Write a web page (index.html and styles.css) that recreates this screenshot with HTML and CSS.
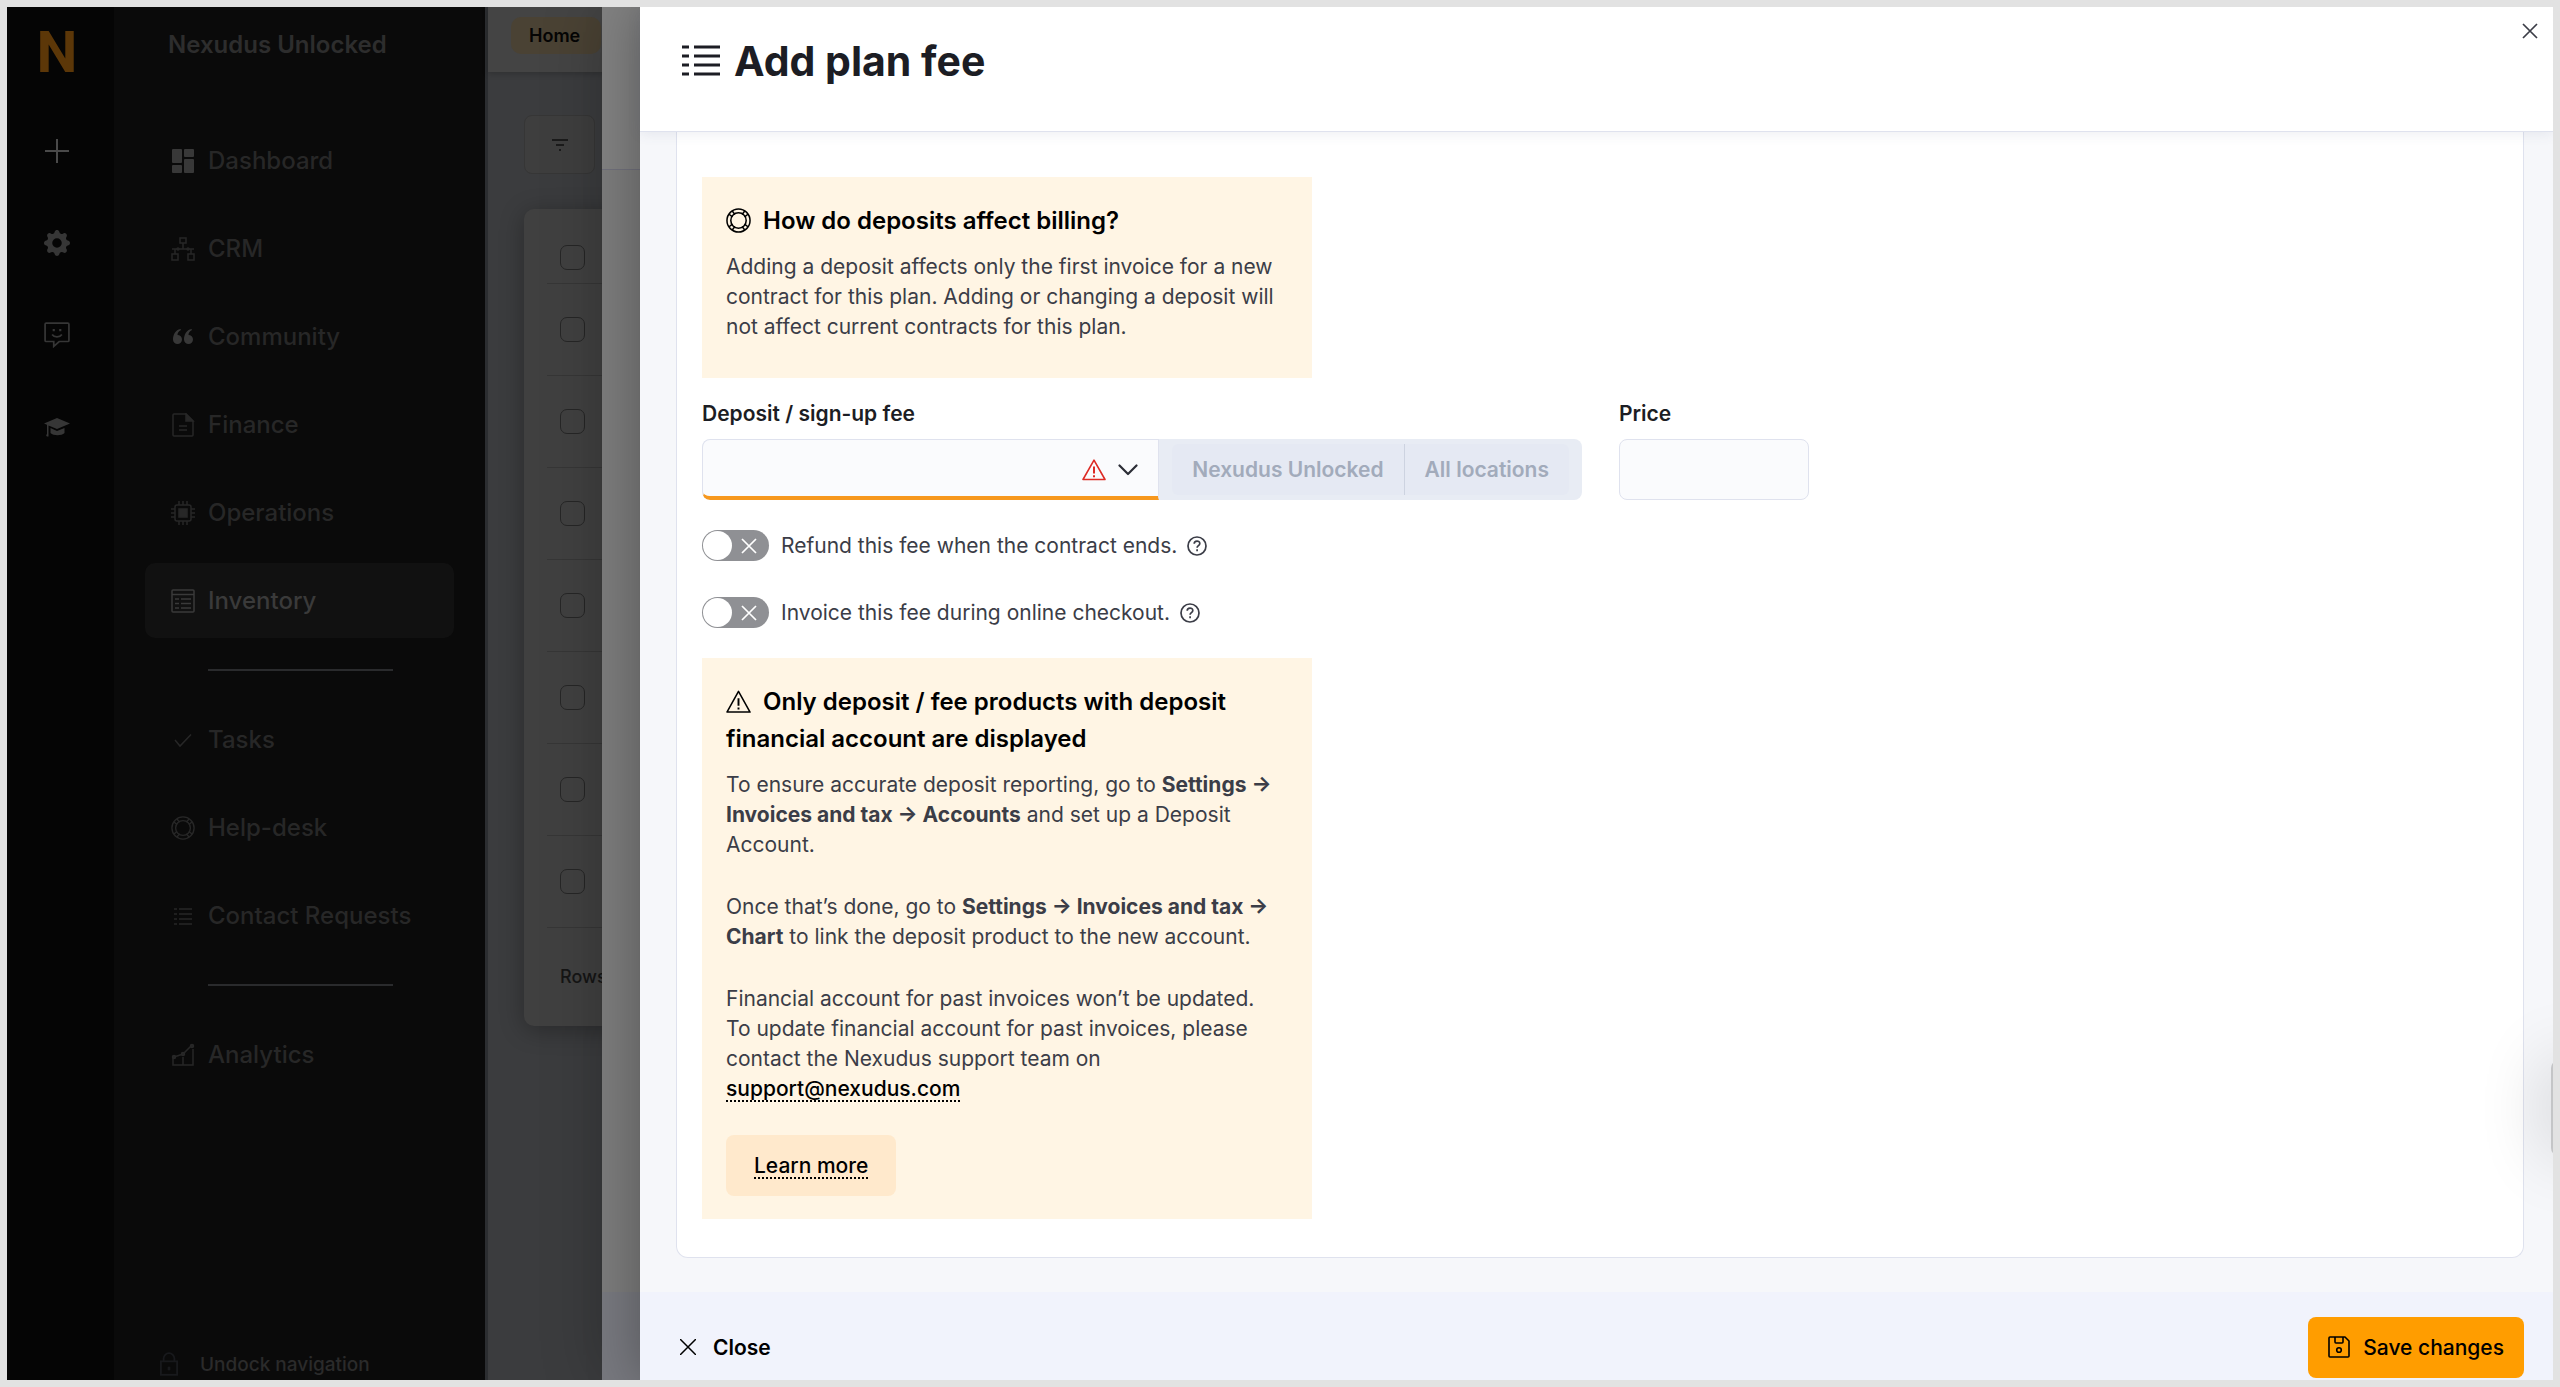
FILE: index.html
```html
<!DOCTYPE html>
<html lang="en">
<head>
    <meta charset="UTF-8">
    <meta name="viewport" content="width=device-width, initial-scale=1.0">
    <title>Add plan fee - Nexudus Unlocked</title>
    <link rel="stylesheet" href="styles.css">
</head>
<body>
    <div class="app">
        <div class="rail">
            <a href="#" class="logo">N</a>
            <button class="rail-btn rail-add" aria-label="Add">
                <svg viewBox="0 0 26 26" fill="none" stroke="currentColor" stroke-width="2"><path d="M13 1v24M1 13h24"/></svg>
            </button>
            <button class="rail-btn" aria-label="Settings">
                <svg viewBox="0 0 16 16" fill="currentColor"><path d="M9.405 1.05c-.413-1.4-2.397-1.4-2.81 0l-.1.34a1.464 1.464 0 0 1-2.105.872l-.31-.17c-1.283-.698-2.686.705-1.987 1.987l.169.311c.446.82.023 1.841-.872 2.105l-.34.1c-1.4.413-1.4 2.397 0 2.81l.34.1a1.464 1.464 0 0 1 .872 2.105l-.17.31c-.698 1.283.705 2.686 1.987 1.987l.311-.169a1.464 1.464 0 0 1 2.105.872l.1.34c.413 1.4 2.397 1.4 2.81 0l.1-.34a1.464 1.464 0 0 1 2.105-.872l.31.17c1.283.698 2.686-.705 1.987-1.987l-.169-.311a1.464 1.464 0 0 1 .872-2.105l.34-.1c1.4-.413 1.4-2.397 0-2.81l-.34-.1a1.464 1.464 0 0 1-.872-2.105l.17-.31c.698-1.283-.705-2.686-1.987-1.987l-.311.169a1.464 1.464 0 0 1-2.105-.872zM8 10.93a2.929 2.929 0 1 1 0-5.86 2.929 2.929 0 0 1 0 5.858z"/></svg>
            </button>
            <button class="rail-btn" aria-label="Feedback">
                <svg viewBox="0 0 24 24" fill="none" stroke="currentColor" stroke-width="1.6"><path d="M2 1h20a1 1 0 0 1 1 1v15a1 1 0 0 1-1 1H14l-5 4.500V18H2a1 1 0 0 1-1-1V2a1 1 0 0 1 1-1z"/><path d="M7.500 11.500c2 3 7 3 9 0"/><path d="M9 6.500v2M15 6.500v2" stroke-width="2"/></svg>
            </button>
            <button class="rail-btn" aria-label="Academy">
                <svg viewBox="0 0 26 24" fill="currentColor"><path d="M13 3 0 8.500l3 1.200V19c-1 1-1 2 0 2.500h1.500v-11L13 14l13-5.500z"/><path d="M6.500 13v5c3 3 11 3 14 0v-5L13 16z"/></svg>
            </button>
        </div>

        <div class="sidebar">
            <div class="brand">Nexudus Unlocked</div>
            <nav class="nav">
                <a href="#" class="nav-item">
                    <svg class="bright" viewBox="0 0 24 24" fill="currentColor"><rect x="1" y="0" width="10" height="14" rx="1"/><rect x="13" y="0" width="10" height="8" rx="1"/><rect x="1" y="16" width="10" height="8" rx="1"/><rect x="13" y="10" width="10" height="14" rx="1"/></svg>
                    Dashboard
                </a>
                <a href="#" class="nav-item">
                    <svg viewBox="0 0 24 24" fill="none" stroke="currentColor" stroke-width="1.500"><rect x="9" y="1" width="6" height="5"/><rect x="1" y="17" width="6" height="6"/><rect x="17" y="17" width="6" height="6"/><path d="M12 6v6M1 12h22M4 12v5M20 12v5"/><circle cx="7" cy="12" r="1"/><circle cx="17" cy="12" r="1"/></svg>
                    CRM
                </a>
                <a href="#" class="nav-item">
                    <svg class="bright" viewBox="0 0 24 24" fill="currentColor"><path d="M9.500 4C4.500 5 2 9.500 2 14.500A4.500 4.500 0 1 0 6.500 10c0-2 1-4 3.500-5zM20.500 4C15.500 5 13 9.500 13 14.500A4.500 4.500 0 1 0 17.500 10c0-2 1-4 3.500-5z"/></svg>
                    Community
                </a>
                <a href="#" class="nav-item">
                    <svg viewBox="0 0 24 24" fill="none" stroke="currentColor" stroke-width="1.500"><path d="M3 1h12l7 7v14a1 1 0 0 1-1 1H3a1 1 0 0 1-1-1V2a1 1 0 0 1 1-1z"/><path d="M15 1v7h7z" fill="currentColor"/><path d="M8 13h8M8 17h8"/></svg>
                    Finance
                </a>
                <a href="#" class="nav-item">
                    <svg viewBox="0 0 24 24" fill="none" stroke="currentColor" stroke-width="1.500"><rect x="4" y="4" width="16" height="16" rx="2"/><rect x="8" y="8" width="8" height="8" fill="currentColor"/><path d="M8 0v4M12 0v4M16 0v4M8 20v4M12 20v4M16 20v4M0 8h4M0 12h4M0 16h4M20 8h4M20 12h4M20 16h4"/></svg>
                    Operations
                </a>
                <a href="#" class="nav-item active">
                    <svg viewBox="0 0 24 24" fill="none" stroke="currentColor" stroke-width="1.500"><rect x="1" y="1" width="22" height="22" rx="1"/><path d="M1 5.500h22M4 10h4M10 10h10M4 14.500h4M10 14.500h10M4 19h4M10 19h10"/></svg>
                    Inventory
                </a>
                <hr class="nav-divider">
                <a href="#" class="nav-item">
                    <svg viewBox="0 0 24 24" fill="none" stroke="currentColor" stroke-width="1.500"><path d="M4 12l5 6L20 6.500"/></svg>
                    Tasks
                </a>
                <a href="#" class="nav-item">
                    <svg viewBox="0 0 26 26" fill="none" stroke="currentColor" stroke-width="1.500"><circle cx="13" cy="13" r="12"/><circle cx="13" cy="13" r="8"/><path d="M6.500 3.200l2.800 3.500M3.200 6.500l3.500 2.800M19.500 3.200l-2.800 3.500M22.800 6.500l-3.500 2.800M6.500 22.800l2.800-3.500M3.200 19.500l3.500-2.800M19.500 22.800l-2.800-3.500M22.800 19.500l-3.500-2.800"/></svg>
                    Help-desk
                </a>
                <a href="#" class="nav-item">
                    <svg viewBox="0 0 24 24" fill="none" stroke="currentColor" stroke-width="1.500"><path d="M3 5h3M8 5h13M3 10h3M8 10h13M3 15h3M8 15h13M3 20h3M8 20h13"/></svg>
                    Contact Requests
                </a>
                <hr class="nav-divider">
                <a href="#" class="nav-item">
                    <svg viewBox="0 0 24 24" fill="none" stroke="currentColor" stroke-width="1.500"><path d="M2 13v9h20V6M3 14l9-3 9-9M12 14v8"/><circle cx="3" cy="14" r="1.500" fill="currentColor"/><circle cx="12" cy="11" r="1.500" fill="currentColor"/><circle cx="21" cy="3" r="1.500" fill="currentColor"/></svg>
                    Analytics
                </a>
            </nav>
            <button class="undock">
                <svg viewBox="0 0 20 26" fill="none" stroke="currentColor" stroke-width="2"><rect x="1" y="10" width="18" height="15"/><path d="M4 10V7a6 6 0 0 1 12 0v3"/><path d="M10 16v4" stroke-width="3"/></svg>
                Undock navigation
            </button>
        </div>

        <div class="workspace">
            <div class="topbar">
                <a href="#" class="tab">Home</a>
            </div>
            <div class="content">
                <button class="filter" aria-label="Filter">
                    <svg viewBox="0 0 16 12" fill="none" stroke="currentColor" stroke-width="2"><path d="M0 1h16M4 6h8M7 11h2"/></svg>
                </button>
                <div class="list">
                    <table class="list-table">
                        <thead>
                            <tr><th><input type="checkbox" aria-label="Select all"></th></tr>
                        </thead>
                        <tbody>
                            <tr><td><input type="checkbox" aria-label="Select row 1"></td></tr>
                            <tr><td><input type="checkbox" aria-label="Select row 2"></td></tr>
                            <tr><td><input type="checkbox" aria-label="Select row 3"></td></tr>
                            <tr><td><input type="checkbox" aria-label="Select row 4"></td></tr>
                            <tr><td><input type="checkbox" aria-label="Select row 5"></td></tr>
                            <tr><td><input type="checkbox" aria-label="Select row 6"></td></tr>
                            <tr><td><input type="checkbox" aria-label="Select row 7"></td></tr>
                        </tbody>
                    </table>
                    <div class="list-footer">Rows</div>
                </div>
            </div>
        </div>

        <!-- parent drawer, dimmed under the open one -->
        <div class="drawer-under">
            <div class="under-header"></div>
            <div class="under-body"></div>
            <div class="under-footer"></div>
        </div>

        <div class="drawer">
            <div class="drawer-header">
                <svg class="title-icon" viewBox="0 0 38 32" fill="none" stroke="currentColor" stroke-width="3"><path d="M0 2h7M12 2h26M0 11h7M12 11h26M0 20h7M12 20h26M0 29h7M12 29h26"/></svg>
                <h1>Add plan fee</h1>
                <button class="dismiss" aria-label="Dismiss">
                    <svg viewBox="0 0 16 16" fill="none" stroke="currentColor" stroke-width="1.700"><path d="M1 1l14 14M15 1L1 15"/></svg>
                </button>
            </div>

            <div class="drawer-body">
                <div class="card">
                    <div class="callout">
                        <h2>
                            <svg class="callout-icon" viewBox="0 0 26 26" fill="none" stroke="currentColor" stroke-width="1.600"><circle cx="13" cy="13" r="12"/><circle cx="13" cy="13" r="8"/><path d="M6.500 3.200l2.800 3.500M3.200 6.500l3.500 2.800M19.500 3.200l-2.800 3.500M22.800 6.500l-3.500 2.800M6.500 22.800l2.800-3.500M3.200 19.500l3.500-2.800M19.500 22.800l-2.800-3.500M22.800 19.500l-3.500-2.800"/></svg>How do deposits affect billing?
                        </h2>
                        <div class="callout-text">
                            <p>Adding a deposit affects only the first invoice for a new contract for this plan. Adding or changing a deposit will not affect current contracts for this plan.</p>
                        </div>
                    </div>

                    <div class="form-row">
                        <div class="field">
                            <label for="deposit">Deposit / sign-up fee</label>
                            <div class="deposit-group">
                                <div class="select-wrap">
                                    <select id="deposit"></select>
                                    <div class="select-icons">
                                        <svg class="warn" viewBox="0 0 24 22" fill="none" stroke="currentColor" stroke-width="1.600" stroke-linejoin="round"><path d="M12 1.200L23 20.500H1z"/><path d="M12 7.500v7M12 16.300v2" stroke-width="2"/></svg>
                                        <svg class="chevron" viewBox="0 0 20 12" fill="none" stroke="currentColor" stroke-width="2.200" stroke-linecap="round" stroke-linejoin="round"><path d="M1.500 1.500L10 10l8.500-8.500"/></svg>
                                    </div>
                                </div>
                                <div class="scope">
                                    <span>Nexudus Unlocked</span>
                                    <span>All locations</span>
                                </div>
                            </div>
                        </div>
                        <div class="field">
                            <label for="price">Price</label>
                            <input type="text" id="price" class="price">
                        </div>
                    </div>

                    <div class="switches">
                        <div class="switch-row">
                            <label class="switch-label">
                                <span class="switch">
                                    <input type="checkbox">
                                    <svg viewBox="0 0 16 16" fill="none" stroke="currentColor" stroke-width="1.700"><path d="M1 1l14 14M15 1L1 15"/></svg>
                                </span>
                                Refund this fee when the contract ends.
                            </label>
                            <svg class="help" viewBox="0 0 20 20" fill="none" stroke="currentColor" stroke-width="1.700"><circle cx="10" cy="10" r="9"/><path d="M7.200 7.800c0-3.600 5.600-3.500 5.600-.3 0 2.100-2.700 2.100-2.700 4.200M10.100 13.300v2"/></svg>
                        </div>
                        <div class="switch-row">
                            <label class="switch-label">
                                <span class="switch">
                                    <input type="checkbox">
                                    <svg viewBox="0 0 16 16" fill="none" stroke="currentColor" stroke-width="1.700"><path d="M1 1l14 14M15 1L1 15"/></svg>
                                </span>
                                Invoice this fee during online checkout.
                            </label>
                            <svg class="help" viewBox="0 0 20 20" fill="none" stroke="currentColor" stroke-width="1.700"><circle cx="10" cy="10" r="9"/><path d="M7.200 7.800c0-3.600 5.600-3.500 5.600-.3 0 2.100-2.700 2.100-2.700 4.200M10.100 13.300v2"/></svg>
                        </div>
                    </div>

                    <div class="callout">
                        <h2>
                            <svg class="callout-icon" viewBox="0 0 26 26" fill="none" stroke="currentColor" stroke-width="1.600" stroke-linejoin="round"><path d="M13 2.500L25 24H1z"/><path d="M13 9.500v8M13 19.300v2" stroke-width="2"/></svg>Only deposit / fee products with deposit financial account are displayed
                        </h2>
                        <div class="callout-text">
                            <p>To ensure accurate deposit reporting, go to <strong>Settings → Invoices and tax → Accounts</strong> and set up a Deposit Account.</p>
                            <p>Once that’s done, go to <strong>Settings → Invoices and tax → Chart</strong> to link the deposit product to the new account.</p>
                            <p>Financial account for past invoices won’t be updated. To update financial account for past invoices, please contact the Nexudus support team on <a href="mailto:support@nexudus.com">support@nexudus.com</a></p>
                        </div>
                        <a href="#" class="learn-more">Learn more</a>
                    </div>
                </div>
            </div>

            <div class="drawer-footer">
                <button class="close-btn">
                    <svg viewBox="0 0 16 16" fill="none" stroke="currentColor" stroke-width="1.500"><path d="M0 0l16 16M16 0L0 16"/></svg>
                    Close
                </button>
                <button class="save-btn">
                    <svg viewBox="0 0 22 22" fill="none" stroke="currentColor" stroke-width="1.600" stroke-linejoin="round"><path d="M1 2a1 1 0 0 1 1-1h15l4 4v15a1 1 0 0 1-1 1H2a1 1 0 0 1-1-1z"/><path d="M7 1v5a1 1 0 0 0 1 1h6a1 1 0 0 0 1-1V1"/><circle cx="11" cy="14" r="2.300"/></svg>
                    Save changes
                </button>
            </div>
        </div>

        <div class="side-widget"></div>
    </div>
</body>
</html>
```

FILE: styles.css
```css
* {
    box-sizing: border-box;
}
body {
    font-family: Inter, 'Open Sans', sans-serif;
    margin: 0;
    padding: 7px;
    height: 100vh;
    background-color: #e2e2e2;
    font-size: 21px;
    color: #3b3d47;
}
button, input, select {
    font-family: inherit;
    font-size: inherit;
    color: inherit;
    margin: 0;
}
button {
    background: none;
    border: none;
    padding: 0;
    cursor: pointer;
}
a {
    color: inherit;
    text-decoration: none;
}
.app {
    position: relative;
    display: flex;
    height: 100%;
    overflow: hidden;
}

/* icon rail */
.rail {
    width: 107px;
    flex: none;
    background-color: #050505;
    color: #363636;
    display: flex;
    flex-direction: column;
    align-items: center;
    gap: 66px;
    padding: 18px 7px 0 0;
}
.logo {
    height: 47px;
    font-family: Roboto, sans-serif;
    font-size: 58px;
    line-height: 54px;
    font-weight: 700;
    color: #5c3708;
}
.rail-btn {
    height: 26px;
}
.rail-btn svg {
    display: block;
    width: 26px;
    height: 26px;
}
.rail-add {
    color: #4a4a4a;
}

/* sidebar */
.sidebar {
    width: 371px;
    flex: none;
    background-color: #0a0a0a;
    color: #272727;
    display: flex;
    flex-direction: column;
}
.brand {
    padding: 20px 54px;
    font-size: 24px;
    line-height: 36px;
    font-weight: 600;
    color: #2d2d2d;
}
.nav {
    display: flex;
    flex-direction: column;
    gap: 13px;
    padding: 40px 31px 0;
}
.nav-item {
    display: flex;
    align-items: center;
    gap: 13px;
    height: 75px;
    padding: 0 26px;
    border-radius: 10px;
    font-size: 24px;
    font-weight: 500;
}
.nav-item svg {
    width: 24px;
    height: 24px;
}
.nav-item .bright {
    color: #383838;
}
.nav-item.active {
    background-color: #111111;
    color: #3a3a3a;
}
.nav-divider {
    width: 185px;
    height: 2px;
    margin: 18px 0 18px 63px;
    border: none;
    background-color: #2a2b2d;
}
.undock {
    display: flex;
    align-items: center;
    gap: 22px;
    margin-top: auto;
    height: 32px;
    padding: 0 46px;
    font-size: 19px;
    font-weight: 500;
    color: #2b2b2b;
}
.undock svg {
    width: 18px;
    height: 26px;
    color: #18191c;
}

/* workspace */
.workspace {
    flex: 1;
    background-color: #3b3c3e;
    border-left: 3px solid #2c2e31;
}
.topbar {
    height: 65px;
    padding: 10px 23px;
    background-color: #444444;
    box-shadow: 0 2px 6px rgba(0, 0, 0, 0.2);
}
.tab {
    display: inline-block;
    padding: 0 21px 0 18px;
    border-radius: 10px;
    background-color: #4a4234;
    font-size: 18px;
    line-height: 37px;
    font-weight: 600;
    color: #050505;
}
.content {
    padding: 43px 36px;
}
.filter {
    display: flex;
    align-items: center;
    justify-content: center;
    width: 71px;
    height: 59px;
    border: 1px solid #363636;
    border-radius: 8px;
    background-color: #3e3e3e;
    color: #1b1b1b;
}
.filter svg {
    width: 16px;
    height: 12px;
}
.list {
    margin-top: 35px;
    padding: 0 23px;
    border-radius: 10px;
    background-color: #404040;
    box-shadow: 0 4px 24px rgba(0, 0, 0, 0.3);
}
.list-table {
    width: 100%;
    border-collapse: collapse;
}
.list-table th {
    height: 74px;
    padding: 24px 13px 0;
    text-align: left;
    border-bottom: 1px solid #363636;
}
.list-table td {
    height: 92px;
    padding: 0 13px;
    border-bottom: 1px solid #363636;
}
.list-table input {
    appearance: none;
    display: block;
    width: 25px;
    height: 25px;
    border: 1px solid #262626;
    border-radius: 7px;
}
.list-footer {
    padding: 34px 13px;
    font-size: 18px;
    line-height: 30px;
    font-weight: 500;
    color: #151515;
}

/* drawers */
.drawer-under {
    position: absolute;
    inset: 0 0 0 595px;
    display: flex;
    flex-direction: column;
    background-color: #7b7b7b;
    box-shadow: 0 0 60px rgba(0, 0, 0, 0.2);
}
.under-header {
    height: 163px;
    background-color: #808080;
    border-bottom: 1px solid #6f6f7a;
}
.under-body {
    flex: 1;
}
.under-footer {
    height: 88px;
    background-color: #77787e;
}
.drawer {
    position: absolute;
    inset: 0 0 0 633px;
    display: flex;
    flex-direction: column;
    background-color: #f6f7fa;
    box-shadow: 0 0 50px rgba(0, 0, 0, 0.3);
}
.drawer-header {
    display: flex;
    align-items: center;
    gap: 14px;
    height: 125px;
    flex: none;
    padding: 0 15px 16px 42px;
    background-color: white;
    border-bottom: 1px solid #dfe2ee;
    box-shadow: 0 2px 12px rgba(80, 90, 130, 0.1);
    position: relative;
}
.title-icon {
    width: 38px;
    height: 32px;
    color: #1c1d24;
}
.drawer-header h1 {
    margin: 0;
    font-size: 41px;
    line-height: 50px;
    font-weight: 700;
    color: #1c1d24;
}
.dismiss {
    margin-left: auto;
    align-self: flex-start;
    padding-top: 16px;
}
.dismiss svg {
    display: block;
    width: 16px;
    height: 16px;
}
.drawer-body {
    flex: 1;
    min-height: 0;
    overflow: hidden;
    padding: 0 29px 0 36px;
}
.card {
    padding: 45px 25px 38px;
    background-color: white;
    border: 1px solid #dfe2ee;
    border-top: none;
    border-radius: 0 0 12px 12px;
}
.callout {
    width: 610px;
    max-width: 100%;
    padding: 25px 24px 23px;
    background-color: #fff5e4;
}
.callout h2 {
    margin: 0;
    font-size: 24px;
    line-height: 37px;
    font-weight: 600;
    color: black;
}
.callout-icon {
    width: 25px;
    height: 25px;
    margin-right: 12px;
    vertical-align: -4px;
}
.callout-text {
    display: flex;
    flex-direction: column;
    gap: 32px;
    padding: 13px 8px 13px 0;
    line-height: 30px;
}
.callout-text p {
    margin: 0;
}
.callout-text a,
.learn-more {
    color: black;
    font-weight: 500;
    text-decoration: underline dotted 2px;
    text-underline-offset: 4px;
}
.learn-more {
    display: inline-block;
    margin-top: 18px;
    padding: 0 28px;
    line-height: 61px;
    border-radius: 8px;
    background-color: #ffe9cc;
    vertical-align: top;
}

/* form */
.form-row {
    display: flex;
    gap: 37px;
    margin: 21px 0 30px;
}
.field label {
    display: block;
    margin-bottom: 10px;
    line-height: 30px;
    font-weight: 600;
    color: #1c1d24;
}
.deposit-group {
    display: flex;
    width: 880px;
    height: 61px;
    border-radius: 8px;
    overflow: hidden;
    background-color: #e8ecf4;
}
.select-wrap {
    position: relative;
    flex: 1;
}
.select-wrap select {
    appearance: none;
    display: block;
    width: 100%;
    height: 100%;
    border: 1px solid #dfe2ee;
    border-bottom: 4px solid #f7981d;
    border-radius: 8px 0 0 8px;
    background-color: #fafbfd;
}
.select-icons {
    position: absolute;
    top: 0;
    right: 21px;
    height: 100%;
    display: flex;
    align-items: center;
    gap: 12px;
    pointer-events: none;
}
.warn {
    width: 24px;
    height: 22px;
    color: #dd2c26;
}
.chevron {
    width: 20px;
    height: 12px;
    color: #2b2d36;
}
.scope {
    display: flex;
    margin: 5px 13px;
    border-radius: 6px;
    background-color: #e5e9f3;
    color: #a2abbb;
    font-weight: 600;
    line-height: 51px;
}
.scope span {
    padding: 0 20px;
}
.scope span + span {
    border-left: 1px solid #cdd3e0;
}
.price {
    width: 190px;
    height: 61px;
    padding: 0 16px;
    border: 1px solid #dfe2ee;
    border-radius: 8px;
    background-color: #fafbfd;
}
.switches {
    display: flex;
    flex-direction: column;
    gap: 36px;
    margin-bottom: 30px;
}
.switch-row {
    display: flex;
    align-items: center;
    gap: 10px;
}
.switch-label {
    display: flex;
    align-items: center;
    gap: 12px;
    line-height: 31px;
}
.switch {
    position: relative;
    width: 67px;
    height: 31px;
}
.switch input {
    appearance: none;
    display: block;
    width: 67px;
    height: 31px;
    padding: 1px;
    border-radius: 16px;
    background-color: #8f9094;
}
.switch input::before {
    content: "";
    display: block;
    width: 29px;
    height: 29px;
    border-radius: 50%;
    background-color: white;
}
.switch svg {
    position: absolute;
    top: 8px;
    right: 12px;
    width: 16px;
    height: 16px;
    color: white;
}
.help {
    width: 20px;
    height: 20px;
}

/* footer */
.drawer-footer {
    display: flex;
    align-items: center;
    justify-content: space-between;
    height: 88px;
    flex: none;
    padding: 22px 29px 0 40px;
    background-color: #f1f3fc;
    color: black;
}
.close-btn,
.save-btn {
    display: flex;
    align-items: center;
    font-size: 21px;
}
.close-btn {
    gap: 17px;
    font-weight: 600;
}
.close-btn svg {
    width: 16px;
    height: 16px;
}
.save-btn {
    gap: 13px;
    height: 61px;
    padding: 0 20px;
    border-radius: 8px;
    background-color: #ff9d00;
    font-weight: 500;
}
.save-btn svg {
    width: 22px;
    height: 22px;
}

/* widget parked just off the right edge */
.side-widget {
    position: absolute;
    right: -38px;
    bottom: 224px;
    width: 40px;
    height: 96px;
    border-radius: 8px;
    background-color: #c4c5c7;
    box-shadow: 0 0 70px rgba(0, 0, 0, 0.2);
}
```
